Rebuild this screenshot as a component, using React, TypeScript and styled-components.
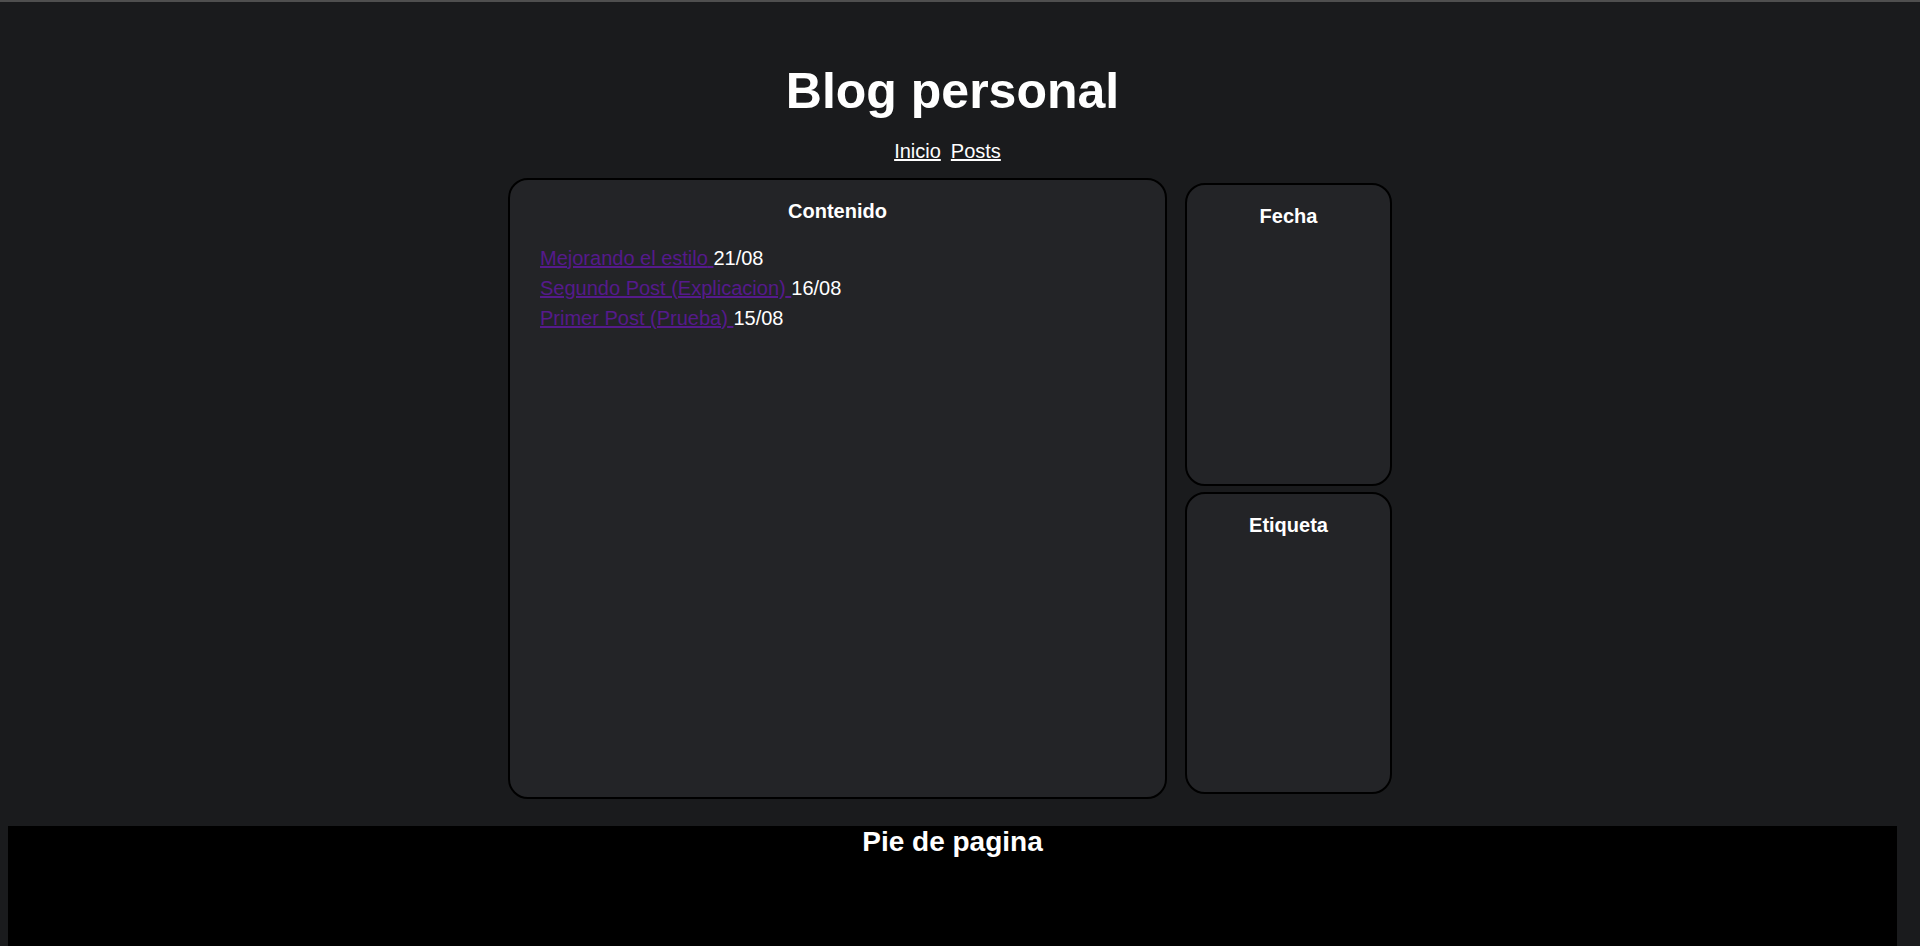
import React from "react";
import styled, { createGlobalStyle } from "styled-components";

const GlobalStyle = createGlobalStyle`
  html {
    background: #1a1b1d;
    border-top: 2px solid #4f4f4f;
  }
  body {
    margin: 8px 23px 8px 8px;
    background: #1a1b1d;
    color: #ffffff;
    font-family: "Liberation Sans", Arial, sans-serif;
  }
`;

const Header = styled.header`
  display: flex;
  flex-direction: column;
  align-items: center;
  padding-top: 53px;
`;

const Title = styled.h1`
  margin: 0;
  font-size: 50px;
  line-height: 57px;
  font-weight: 700;
`;

const NavList = styled.nav`
  display: flex;
  margin-top: 20px;
  font-size: 20px;
  line-height: 23px;
`;

const NavLink = styled.a`
  color: #ffffff;
  text-decoration: underline;
  margin-right: 10px;
`;

const Layout = styled.div`
  display: grid;
  grid-template-columns: 659px 217px;
  column-gap: 13px;
  width: 889px;
  margin: 15px auto 0;
`;

const Card = styled.section`
  background: #232427;
  border: 2px solid #000000;
  border-radius: 20px;
  box-sizing: border-box;
`;

const MainCard = styled(Card)`
  height: 621px;
  padding: 0 30px;
`;

const Aside = styled.aside`
  display: flex;
  flex-direction: column;
  gap: 6px;
  padding: 5px;
`;

const SideCard = styled(Card)`
  flex: 1;
  text-align: center;
`;

const CardTitle = styled.h3`
  margin: 20px 0;
  font-size: 20px;
  line-height: 23px;
  font-weight: 700;
  text-align: center;
`;

const PostList = styled.ul`
  list-style: none;
  margin: 20px 0;
  padding: 0;
  font-size: 20px;
  line-height: 30px;
`;

const PostLink = styled.a`
  color: #551a8b;
  text-decoration: underline;
`;

const Footer = styled.footer`
  margin-top: 27px;
  height: 200px;
  background: #000000;
  text-align: center;
`;

const FooterTitle = styled.h2`
  margin: 0;
  font-size: 28px;
  font-weight: 700;
`;

const posts = [
  { title: "Mejorando el estilo", date: "21/08" },
  { title: "Segundo Post (Explicacion)", date: "16/08" },
  { title: "Primer Post (Prueba)", date: "15/08" },
];

export default function App() {
  return (
    <>
      <GlobalStyle />
      <Header>
        <Title>Blog personal</Title>
        <NavList>
          <NavLink href="#">Inicio</NavLink>
          <NavLink href="#">Posts</NavLink>
        </NavList>
      </Header>
      <Layout>
        <MainCard>
          <CardTitle>Contenido</CardTitle>
          <PostList>
            {posts.map((p) => (
              <li key={p.title}>
                <PostLink href="#">{p.title} </PostLink>
                {p.date}
              </li>
            ))}
          </PostList>
        </MainCard>
        <Aside>
          <SideCard>
            <CardTitle>Fecha</CardTitle>
          </SideCard>
          <SideCard>
            <CardTitle>Etiqueta</CardTitle>
          </SideCard>
        </Aside>
      </Layout>
      <Footer>
        <FooterTitle>Pie de pagina</FooterTitle>
      </Footer>
    </>
  );
}
